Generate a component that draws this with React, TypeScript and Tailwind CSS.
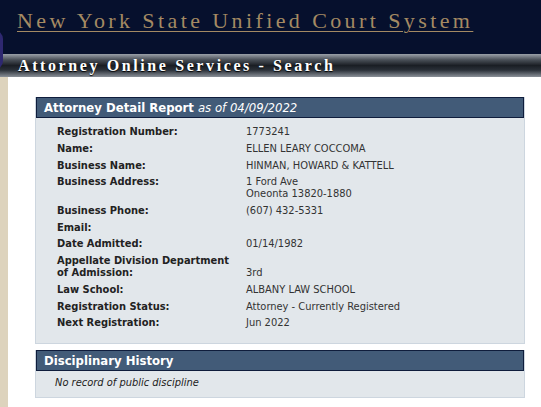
import React from 'react';

const rows: { label: React.ReactNode; value: React.ReactNode }[] = [
  { label: 'Registration Number:', value: '1773241' },
  { label: 'Name:', value: 'ELLEN LEARY COCCOMA' },
  { label: 'Business Name:', value: 'HINMAN, HOWARD & KATTELL' },
  {
    label: 'Business Address:',
    value: (
      <>
        1 Ford Ave
        <br />
        Oneonta 13820-1880
      </>
    ),
  },
  { label: 'Business Phone:', value: '(607) 432-5331' },
  { label: 'Email:', value: '' },
  { label: 'Date Admitted:', value: '01/14/1982' },
  {
    label: (
      <>
        Appellate Division Department
        <br />
        of Admission:
      </>
    ),
    value: (
      <>
        <br />
        3rd
      </>
    ),
  },
  { label: 'Law School:', value: 'ALBANY LAW SCHOOL' },
  { label: 'Registration Status:', value: 'Attorney - Currently Registered' },
  { label: 'Next Registration:', value: 'Jun 2022' },
];

function PanelHeader({ children }: { children: React.ReactNode }) {
  return (
    <div className="bg-[#425b78] border border-[#0f1d3c] px-[7px] h-[21px] flex items-center text-white text-[13px] leading-none">
      {children}
    </div>
  );
}

export default function App() {
  return (
    <div className="w-[541px] h-[407px] overflow-hidden bg-white font-['DejaVu_Sans_Condensed','DejaVu_Sans',Verdana,sans-serif]">
      <div className="relative h-[54px] bg-[#06102d] pl-[17px] pt-[4px]">
        <div className="absolute left-[-15px] top-[30px] w-[18px] h-[40px] rounded-full bg-[#2e2870]" />
        <a className="relative font-['Liberation_Serif',serif] text-[22px] tracking-[3.4px] text-[#a48a63] underline underline-offset-[3px] decoration-1">
          New York State Unified Court System
        </a>
      </div>
      <div className="h-[23px] bg-[linear-gradient(#9aa0a8_0%,#4a5058_25%,#1a1e24_50%,#2a3038_70%,#8a9098_100%)] pl-[18px] flex items-center">
        <span className="font-['Liberation_Serif',serif] text-[16px] font-bold tracking-[2.6px] text-white [text-shadow:0_1px_1px_#000]">
          Attorney Online Services - Search
        </span>
      </div>
      <div className="flex h-[330px]">
        <div className="w-[8px] bg-[#ddd3bd] shrink-0" />
        <div className="flex-1 pl-[27px] pr-[16px] pt-[20px]">
          <div className="border-b border-x border-[#cdd6df] bg-[#e2e7eb]">
            <PanelHeader>
              <span className="font-bold">Attorney Detail Report</span>
              <span className="italic ml-[4px]">as of 04/09/2022</span>
            </PanelHeader>
            <div className="pl-[21px] pt-[6px] pb-[11px] text-[11px] leading-[12px]">
              {rows.map((r, i) => (
                <div key={i} className="flex py-[2.35px]">
                  <div className="w-[189px] shrink-0 whitespace-nowrap font-bold text-[#222]">{r.label}</div>
                  <div className="text-[#333] whitespace-nowrap">{r.value}</div>
                </div>
              ))}
            </div>
          </div>
          <div className="mt-[6px] border-b border-x border-[#cdd6df] bg-[#e2e7eb]">
            <PanelHeader>
              <span className="font-bold">Disciplinary History</span>
            </PanelHeader>
            <div className="pl-[19px] h-[26px] flex items-center text-[11px] italic text-[#222]">
              No record of public discipline
            </div>
          </div>
        </div>
      </div>
    </div>
  );
}
